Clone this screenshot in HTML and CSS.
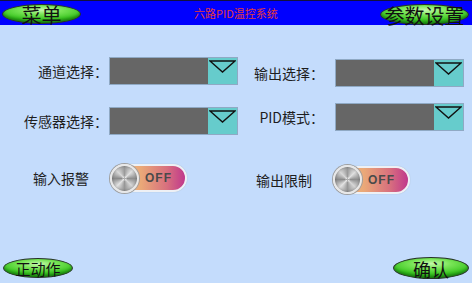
FILE: index.html
```html
<!DOCTYPE html>
<html lang="zh">
<head>
<meta charset="utf-8">
<link rel="stylesheet" href="styles.css">
</head>
<body>
<div class="screen">
  <header class="topbar">
    <div class="gbtn btn-menu"><span>菜单</span></div>
    <div class="title">六路PID温控系统</div>
    <div class="gbtn btn-params"><span>参数设置</span></div>
  </header>

  <main class="form">
    <label class="lbl l1 r1">通道选择：</label>
    <div class="combo c1 r1"><span class="field"></span><span class="arrow"><svg width="27" height="13" viewBox="0 0 27 13"><polygon points="1,1 26,1 13.5,12" fill="none" stroke="#111" stroke-width="1.4"/></svg></span></div>
    <label class="lbl l2 r1 sh1">输出选择：</label>
    <div class="combo c2 r1 sh1"><span class="field"></span><span class="arrow"><svg width="27" height="13" viewBox="0 0 27 13"><polygon points="1,1 26,1 13.5,12" fill="none" stroke="#111" stroke-width="1.4"/></svg></span></div>

    <label class="lbl l1 r2">传感器选择：</label>
    <div class="combo c1 r2"><span class="field"></span><span class="arrow"><svg width="27" height="13" viewBox="0 0 27 13"><polygon points="1,1 26,1 13.5,12" fill="none" stroke="#111" stroke-width="1.4"/></svg></span></div>
    <label class="lbl l2 r2 sh2">PID模式：</label>
    <div class="combo c2 r2 sh2"><span class="field"></span><span class="arrow"><svg width="27" height="13" viewBox="0 0 27 13"><polygon points="1,1 26,1 13.5,12" fill="none" stroke="#111" stroke-width="1.4"/></svg></span></div>

    <label class="lbl tl1 r3">输入报警</label>
    <div class="toggle tg1 r3"><span class="knob"></span><span class="off">OFF</span></div>
    <label class="lbl tl2 r3 sh3">输出限制</label>
    <div class="toggle tg2 r3 sh3"><span class="knob"></span><span class="off">OFF</span></div>
  </main>

  <footer class="bottombar">
    <div class="gbtn btn-action"><span>正动作</span></div>
    <div class="gbtn btn-ok"><span>确认</span></div>
  </footer>
</div>
</body>
</html>
```
FILE: styles.css
```css
* { box-sizing: border-box; }
html, body { margin: 0; padding: 0; }
body {
  width: 472px;
  height: 283px;
  overflow: hidden;
  background: #c4dcfc;
  font-family: "Noto Sans CJK SC", "Noto Sans", sans-serif;
}
.screen {
  width: 472px;
  height: 283px;
  display: flex;
  flex-direction: column;
}
.topbar {
  height: 25px;
  background: #0000ff;
  border-top: 1px solid #101040;
  display: flex;
  align-items: flex-start;
  justify-content: space-between;
  position: relative;
  padding: 0 3px 0 2px;
}
.title {
  position: absolute;
  left: 0;
  right: 0;
  top: 4px;
  text-align: center;
  font-size: 11px;
  line-height: 16px;
  color: #e43a3a;
}
.gbtn {
  color: #111;
  border: 1.5px solid #263326;
  border-radius: 50%;
  background: radial-gradient(ellipse 85% 75% at 50% 28%, #c4f8aa 0%, #78e456 32%, #3cc622 68%, #1f9c10 100%);
  box-shadow: inset 0 -2px 3px rgba(0,70,0,0.45);
  display: flex;
  align-items: center;
  justify-content: center;
  white-space: nowrap;
}
.gbtn span { display: block; padding-top: 2px; }
.btn-menu {
  width: 79px;
  height: 20px;
  margin-top: 3px;
  font-size: 20px;
  line-height: 20px;
}
.btn-params {
  width: 89px;
  height: 21px;
  margin-top: 3px;
  font-size: 20px;
  line-height: 20px;
}
.form {
  display: grid;
  grid-template-columns: 104px 134px 97px 137px;
  grid-template-rows: 50px 50px 64px;
  margin-top: 21px;
  align-items: center;
}
.r1 { grid-row: 1; }
.r2 { grid-row: 2; }
.r3 { grid-row: 3; }
.lbl {
  font-size: 14px;
  line-height: 18px;
  color: #1e1e1e;
  white-space: nowrap;
}
.l1 { grid-column: 1; justify-self: end; margin-right: -4px; }
.l2 { grid-column: 3; justify-self: end; margin-right: 11px; }
.c1 { grid-column: 2; justify-self: end; }
.c2 { grid-column: 4; justify-self: start; }
.sh1 { margin-top: 4px; }
.sh2 { margin-bottom: 8px; }
.sh3 { margin-top: 3px; }
.combo {
  width: 129px;
  height: 28px;
  display: flex;
  border: 1px solid #8fa9c4;
}
.field {
  flex: 1;
  background: #666666;
}
.arrow {
  width: 29px;
  background: #66cccc;
  display: flex;
  justify-content: center;
  align-items: flex-start;
  padding-top: 2px;
}
.tl1 { grid-column: 1; justify-self: start; margin-left: 33px; }
.tl2 { grid-column: 3; justify-self: start; margin-left: 18px; }
.tg1 { grid-column: 2; justify-self: start; margin-left: 6px; }
.tg2 { grid-column: 4; justify-self: start; margin-left: -2px; }
.toggle {
  width: 77px;
  height: 28px;
  border-radius: 14px;
  border: 2px solid #eef0f4;
  background: linear-gradient(90deg, #f0c084 0%, #eaa878 40%, #d8707e 75%, #c0388c 100%);
  box-shadow: 0 0 1px #9aa;
  display: flex;
  align-items: center;
}
.knob {
  width: 29px;
  height: 29px;
  margin-left: -2px;
  flex: none;
  border-radius: 50%;
  border: 2px solid #e8e8e8;
  background:
    radial-gradient(circle, rgba(255,255,255,0.25) 0 2px, transparent 3px),
    conic-gradient(#9a9a9a, #e0e0e0, #8e8e8e, #d6d6d6, #979797, #e2e2e2, #8a8a8a, #d8d8d8, #9a9a9a);
  box-shadow: 0 0 0 1px #a0a0a0, inset 0 0 3px rgba(0,0,0,0.35);
}
.off {
  margin-left: 6px;
  font-family: "Liberation Sans", Arial, sans-serif;
  font-weight: bold;
  font-size: 12px;
  letter-spacing: 1px;
  color: #4a4a4a;
}
.bottombar {
  margin-top: auto;
  display: flex;
  justify-content: space-between;
  align-items: flex-end;
  padding: 0 3px 4px 3px;
}
.btn-action {
  width: 70px;
  height: 20px;
  margin-bottom: 1px;
  font-size: 15px;
  line-height: 20px;
}
.btn-ok {
  width: 76px;
  height: 22px;
  font-size: 18px;
  line-height: 20px;
}
```
